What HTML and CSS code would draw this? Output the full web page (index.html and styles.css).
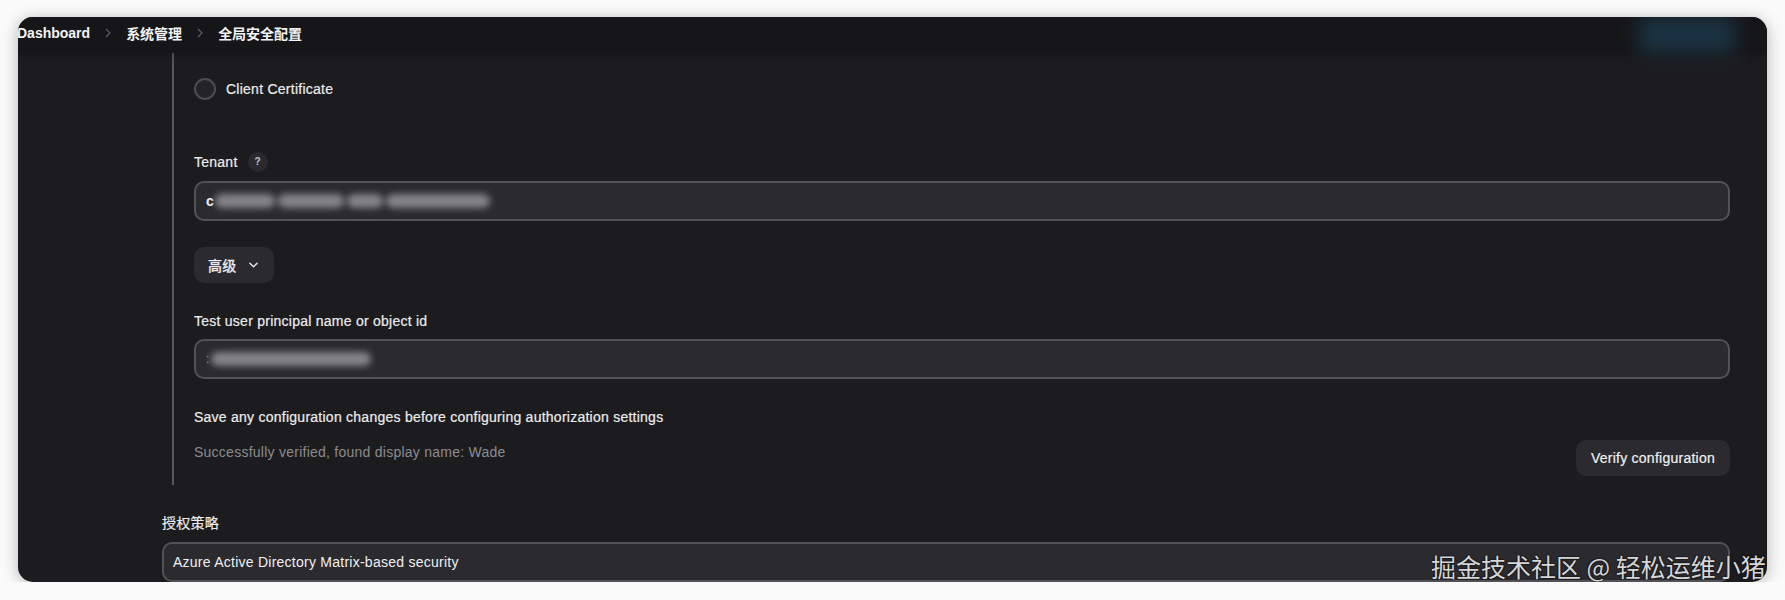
FILE: index.html
```html
<!DOCTYPE html>
<html lang="zh-CN">
<head>
<meta charset="utf-8">
<title>全局安全配置</title>
<link rel="stylesheet" href="styles.css">
</head>
<body>
<div class="window">
  <header class="topbar">
    <nav class="crumbs">
      <span class="crumb">Dashboard</span>
      <svg class="sep" viewBox="0 0 6 10"><polyline points="1,1 5,5 1,9"/></svg>
      <span class="crumb">系统管理</span>
      <svg class="sep" viewBox="0 0 6 10"><polyline points="1,1 5,5 1,9"/></svg>
      <span class="crumb">全局安全配置</span>
    </nav>
    <div class="glow"></div>
  </header>
  <main class="content">
    <section class="nested">
      <label class="radio-row">
        <span class="radio"></span>
        <span class="strong">Client Certificate</span>
      </label>
      <div class="field field-tenant">
        <div class="label strong">Tenant <span class="help">?</span></div>
        <div class="input">
          <span class="val">c</span>
          <span class="blurred">
            <span class="seg" style="width:60px"></span>
            <span class="seg" style="width:66px"></span>
            <span class="seg" style="width:36px"></span>
            <span class="seg" style="width:104px"></span>
          </span>
        </div>
      </div>
      <button class="btn adv">高级
        <svg class="chev" viewBox="0 0 10 6"><polyline points="1,1 5,5 9,1"/></svg>
      </button>
      <div class="field field-test">
        <div class="label strong">Test user principal name or object id</div>
        <div class="input">
          <span class="dot">:</span>
          <span class="blurred">
            <span class="seg" style="width:160px"></span>
          </span>
        </div>
      </div>
      <p class="note strong">Save any configuration changes before configuring authorization settings</p>
      <div class="verify-row">
        <span class="status">Successfully verified, found display name: Wade</span>
        <button class="btn verify">Verify configuration</button>
      </div>
    </section>
    <div class="field field-outer">
      <div class="label strong">授权策略</div>
      <div class="input select">Azure Active Directory Matrix-based security</div>
    </div>
  </main>
  <div class="watermark">掘金技术社区 @ 轻松运维小猪</div>
</div>
</body>
</html>
```

FILE: styles.css
```css
* {
  box-sizing: border-box;
}

html,
body {
  margin: 0;
  padding: 0;
}

body {
  background: #fafafa;
  font-family: "Liberation Sans", Arial, "Noto Sans CJK SC", sans-serif;
  font-size: 14px;
  letter-spacing: 0.25px;
  color: #ececee;
  overflow: hidden;
}

.window {
  position: relative;
  margin: 17px 18px 0;
  height: 565px;
  background: #1c1c1f;
  border-radius: 15px;
  overflow: hidden;
  box-shadow: 0 2px 16px rgba(0, 0, 0, 0.28);
}

.topbar {
  position: relative;
  z-index: 1;
  height: 36px;
  padding-bottom: 5px;
  display: flex;
  align-items: center;
  justify-content: space-between;
  background: #161618;
  box-shadow: 0 3px 8px rgba(0, 0, 0, 0.22);
}

.crumbs {
  display: flex;
  align-items: center;
  margin-left: -1px;
  font-weight: 700;
  letter-spacing: 0;
  color: #f4f4f5;
}

.sep {
  width: 6px;
  height: 10px;
  margin: 0 15px;
  fill: none;
  stroke: #5c5c60;
  stroke-width: 1.2;
}

.glow {
  width: 96px;
  height: 36px;
  margin: 5px 32px 0 0;
  background: #1b3342;
  filter: blur(9px);
}

.content {
  padding: 0 37px 0 144px;
}

.nested {
  margin-left: 10px;
  border-left: 2px solid #58585c;
  padding: 25px 0 9px 20px;
}

.strong {
  -webkit-text-stroke: 0.2px currentColor;
}

.radio-row {
  display: flex;
  align-items: center;
  gap: 10px;
  height: 22px;
}

.radio {
  width: 22px;
  height: 22px;
  border-radius: 50%;
  border: 2px solid #4d4d51;
  background: #242427;
}

.field-tenant {
  margin-top: 52px;
}

.field-test {
  margin-top: 28px;
}

.field-outer {
  margin-top: 28px;
}

.label {
  display: flex;
  align-items: center;
  gap: 10px;
  height: 20px;
  line-height: 20px;
}

.help {
  width: 20px;
  height: 20px;
  border-radius: 50%;
  background: #2a2a2e;
  color: #c4c4c8;
  font-size: 10px;
  font-weight: 700;
  letter-spacing: 0;
  -webkit-text-stroke: 0;
  display: flex;
  align-items: center;
  justify-content: center;
}

.input {
  margin-top: 9px;
  height: 40px;
  border: 2px solid #525258;
  border-radius: 10px;
  background: #2a2a2f;
  display: flex;
  align-items: center;
  padding-left: 10px;
  color: #f0f0f2;
}

.field-test .input {
  margin-top: 8px;
}

.field-outer .input {
  margin-top: 9px;
  padding-left: 9px;
}

.val {
  font-weight: 700;
}

.dot {
  color: #9a9a9e;
  font-size: 12px;
}

.blurred {
  display: flex;
  gap: 3px;
  margin-left: 1px;
  filter: blur(3.5px);
}

.seg {
  display: block;
  height: 14px;
  border-radius: 7px;
  background: #85858a;
}

.btn {
  font: inherit;
  letter-spacing: inherit;
  color: #f0f0f2;
  border: none;
  background: #2a2a2f;
  border-radius: 10px;
  height: 36px;
  display: flex;
  align-items: center;
  -webkit-text-stroke: 0.2px currentColor;
}

.adv {
  margin-top: 26px;
  padding: 0 16px 0 14px;
  gap: 12px;
  font-weight: 400;
  -webkit-text-stroke: 0.35px currentColor;
}

.chev {
  width: 9px;
  height: 6px;
  fill: none;
  stroke: #e6e6e8;
  stroke-width: 1.6;
  stroke-linecap: round;
  stroke-linejoin: round;
}

.note {
  margin: 28px 0 0;
  line-height: 20px;
}

.verify-row {
  margin-top: 13px;
  display: flex;
  justify-content: space-between;
  align-items: flex-start;
}

.status {
  margin-top: 2px;
  line-height: 20px;
  color: #8b8b90;
}

.verify {
  padding: 0 15px;
}

.watermark {
  position: absolute;
  left: 1413px;
  top: 534px;
  font-family: "Noto Sans CJK SC", sans-serif;
  font-size: 25px;
  line-height: 1.2;
  letter-spacing: 0;
  white-space: nowrap;
  color: #d6d6d8;
  text-shadow: 0 0 2px rgba(0, 0, 0, 0.9), 0 0 1px rgba(0, 0, 0, 0.9);
}
```
